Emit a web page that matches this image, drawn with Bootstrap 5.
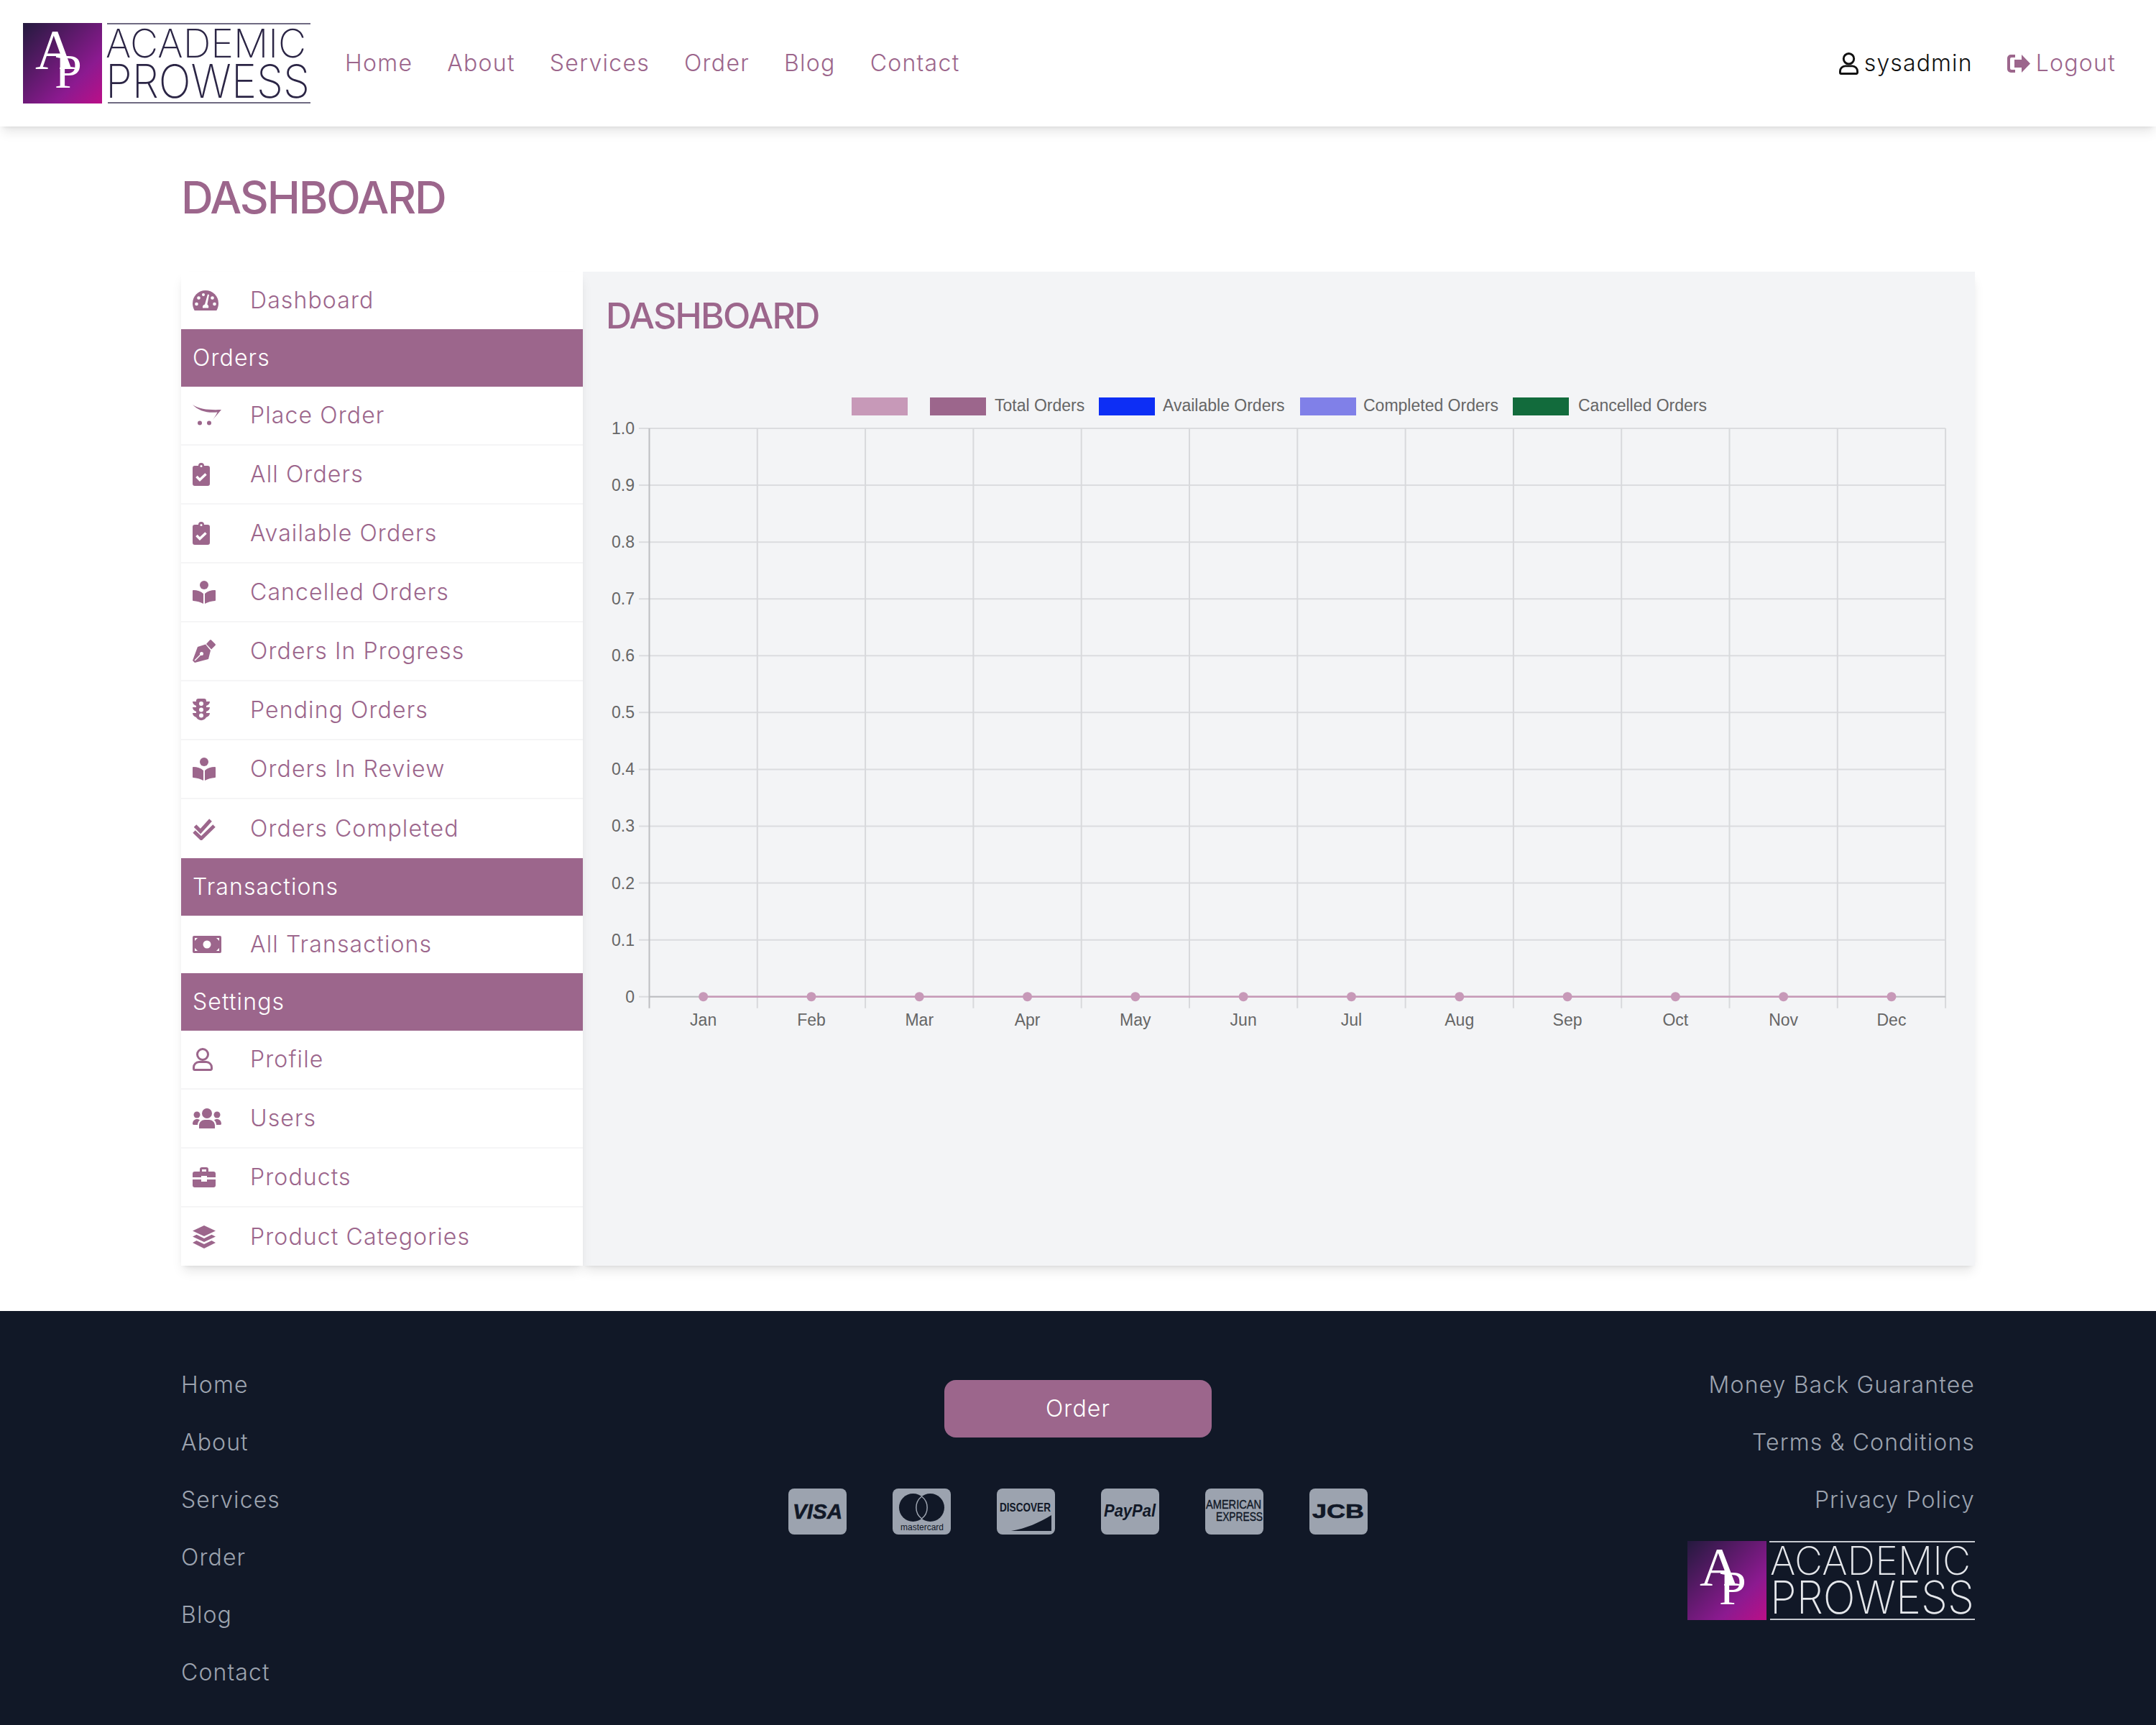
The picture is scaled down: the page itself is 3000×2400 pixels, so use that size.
<!DOCTYPE html>
<html lang="en">
<head>
    <meta charset="UTF-8">
    <meta name="viewport" content="width=device-width, initial-scale=1.0">
    <title>Academic Prowess - Dashboard</title>

    <!-- Bootstrap CSS -->
    <link href="https://cdn.jsdelivr.net/npm/bootstrap@5.3.0/dist/css/bootstrap.min.css" rel="stylesheet">
    <style>
        body {
            background-color: #fff;
            font-family: Inter, "Open Sans", sans-serif;
            font-weight: 300;
            font-size: 32px;
            color: #9c668c;
            letter-spacing: .035em;
        }
        .top-bar {
            height: 176px;
            padding: 0 32px 0 32px;
            background: #fff;
            box-shadow: 0 10px 15px -3px rgba(0, 0, 0, .1), 0 4px 6px -4px rgba(0, 0, 0, .1);
            position: relative;
        }
        .top-bar .nav-link {
            color: #9c668c;
            padding: 0 24px;
            font-size: 32px;
            letter-spacing: .04em;
        }
        .top-links { margin-left: 24px; }
        .user-name { color: #111; }
        .wrap-page { width: 2496px; margin: 0 auto; }
        .page-title {
            font-size: 62px;
            font-weight: 500;
            letter-spacing: -.035em;
            color: #9c668c;
            line-height: 76px;
            margin: 61px 0 65px;
        }
        .side-menu {
            width: 559px;
            flex: none;
            box-shadow: 0 10px 15px -3px rgba(0, 0, 0, .1), 0 4px 6px -4px rgba(0, 0, 0, .1);
            position: relative;
            --bs-list-group-border-radius: 0;
        }
        .side-menu .list-group-item {
            display: flex;
            align-items: center;
            height: 82px;
            padding: 0 0 0 16px;
            border: 0;
            border-bottom: 2px solid #f5f5f6;
            color: #9c668c;
            background: #fff;
            font-size: 32px;
        }
        .side-menu .side-first, .side-menu .side-single { height: 80px; border-bottom: 0; }
        .side-menu .side-last { height: 81px; border-bottom: 0; }
        .side-menu .side-head {
            height: 80px;
            background: #9c668c;
            color: #fff;
            border-bottom: 0;
        }
        .ico-slot { width: 80px; flex: none; display: flex; align-items: center; }
        .main-panel {
            flex: 1;
            background: #f3f4f6;
            padding: 30px 30px 0 32px;
            box-shadow: 0 10px 15px -3px rgba(0, 0, 0, .1), 0 4px 6px -4px rgba(0, 0, 0, .1);
        }
        .panel-title {
            font-size: 50px;
            font-weight: 500;
            letter-spacing: -.035em;
            color: #9c668c;
            line-height: 62px;
            margin: 0 0 60px;
        }
        .chart-box { display: block; margin-left: 2px; }
        .chart-box text { font-family: "Liberation Sans", Arial, sans-serif; font-size: 23px; fill: #666; letter-spacing: 0; }
        .site-foot {
            margin-top: 63px;
            height: 577px;
            background: #111827;
            padding-top: 63px;
        }
        .foot-grid {
            display: grid;
            grid-template-columns: 1fr auto 1fr;
        }
        .foot-link {
            display: block;
            height: 80px;
            line-height: 80px;
            color: #9ca3af;
            text-decoration: none;
        }
        .foot-mid { padding-top: 33px; }
        .order-btn {
            width: 372px;
            height: 80px;
            background: #9c668c;
            border: 0;
            border-radius: 16px;
            color: #fff;
            font-size: 32px;
            font-weight: 300;
            letter-spacing: inherit;
        }
        .pay-row { gap: 64px; margin-top: 71px; }
        .pay-ico { display: block; overflow: hidden; }
        .pay-ico text { font-family: "Liberation Sans", Arial, sans-serif; fill: #111827; letter-spacing: 0; }
        .foot-logo { margin-top: 17px; color: #e5e7eb; }
        .logo-svg { display: block; overflow: visible; }
        .logo-svg text.word { font-family: Inter, sans-serif; font-weight: 200; fill: currentColor; letter-spacing: 0; }
        .logo-svg text.mono { font-family: "Liberation Serif", serif; fill: #fff; letter-spacing: 0; }
    </style>
</head>
<body>
    <!-- icons -->
    <svg width="0" height="0" class="d-block">
        <defs>
            <linearGradient id="logoGrad" x1="0" y1="0" x2="1" y2="1">
                <stop offset="0" stop-color="#241a3e"/>
                <stop offset=".7" stop-color="#8c1a90"/>
                <stop offset="1" stop-color="#bb0f88"/>
            </linearGradient>
        </defs>
        <symbol id="i-gauge" viewBox="0 0 36 28">
            <path fill="currentColor" d="M18 0A18 18 0 0 1 36 18c0 3.600-1 7-2.700 10H2.700C1 25 0 21.600 0 18A18 18 0 0 1 18 0Z"/>
            <g fill="#fff"><circle cx="5.500" cy="19" r="2.300"/><circle cx="8.500" cy="10.500" r="2.300"/><circle cx="27.500" cy="10.500" r="2.300"/><circle cx="30.500" cy="19" r="2.300"/><circle cx="15" cy="6" r="2"/></g>
            <path fill="#fff" d="M14 24.500a4.500 4.500 0 0 1 3-5L21 5.500l2 .5-2.600 13.500a4.500 4.500 0 0 1 1.600 5Z"/>
        </symbol>
        <symbol id="i-cart" viewBox="0 0 40 30">
            <path fill="currentColor" d="M0 0C10 7 24 7.500 40 7L28 21C31 17 33 14 34.500 10.500 20 12 8 8.500 0 0Z"/>
            <circle cx="10" cy="25.500" r="3" fill="currentColor"/><circle cx="23" cy="25.500" r="3" fill="currentColor"/>
        </symbol>
        <symbol id="i-clip" viewBox="0 0 24 32">
            <path fill="currentColor" d="M3 4h5a4 4 0 0 1 8 0h5a3 3 0 0 1 3 3v22a3 3 0 0 1-3 3H3a3 3 0 0 1-3-3V7a3 3 0 0 1 3-3Z"/>
            <circle cx="12" cy="4.500" r="1.500" fill="#fff"/>
            <path fill="none" stroke="#fff" stroke-width="3.500" d="M5.500 19l4.500 4.500 8.500-8"/>
        </symbol>
        <symbol id="i-book" viewBox="0 0 32 32">
            <circle cx="16" cy="6" r="6" fill="currentColor"/>
            <path fill="currentColor" d="M1 13c5.500 0 10.500 1.500 14 5v14C11 29.500 6 28.500 1 28a1 1 0 0 1-1-1V14a1 1 0 0 1 1-1ZM31 13c-5.500 0-10.500 1.500-14 5v14c4-2.500 9-3.500 14-4a1 1 0 0 0 1-1V14a1 1 0 0 0-1-1Z"/>
        </symbol>
        <symbol id="i-pen" viewBox="0 0 32 32">
            <path fill="currentColor" d="M0 29 7 10l11-3.500L25 15l-3 12-19 5Z"/>
            <path fill="currentColor" d="M19 6 24 .5a1.500 1.500 0 0 1 2 0L31.500 6a1.500 1.500 0 0 1 0 2L26 13.500Z"/>
            <path stroke="#fff" stroke-width="1.500" d="M3 29 11 21"/>
            <circle cx="12.500" cy="19.500" r="2.500" fill="#fff"/>
        </symbol>
        <symbol id="i-light" viewBox="0 0 24 32">
            <path fill="currentColor" d="M0 4h5V3a3 3 0 0 1 3-3h8a3 3 0 0 1 3 3v1h5c0 3-2 5-5 6v2h5c0 3-2 5-5 6v2h5c0 3-2 5-5 6a8 8 0 0 1-14 0c-3-1-5-3-5-6h5v-2c-3-1-5-3-5-6h5v-2C2 9 0 7 0 4Z"/>
            <g fill="#fff"><circle cx="12" cy="7" r="3"/><circle cx="12" cy="15.500" r="3"/><circle cx="12" cy="23.500" r="3"/></g>
        </symbol>
        <symbol id="i-check" viewBox="0 0 32 32">
            <g fill="none" stroke="currentColor" stroke-width="5"><path d="M3.500 12 11 19.500 25 4"/><path d="M2 20 12 29.500 30 12"/></g>
        </symbol>
        <symbol id="i-money" viewBox="0 0 40 24">
            <rect width="40" height="24" rx="2" fill="currentColor"/>
            <circle cx="20" cy="12" r="5.500" fill="#fff"/>
            <g fill="#fff"><path d="M3 3h4l-4 4ZM37 3h-4l4 4ZM3 21h4l-4-4ZM37 21h-4l4-4Z"/></g>
        </symbol>
        <symbol id="i-user" viewBox="0 0 28 32">
            <g fill="none" stroke="currentColor" stroke-width="3"><circle cx="14" cy="9" r="7.500"/><path d="M9 19.500h10a7.500 7.500 0 0 1 7.500 7.500v2a1.500 1.500 0 0 1-1.500 1.500H3A1.500 1.500 0 0 1 1.500 29v-2A7.500 7.500 0 0 1 9 19.500Z"/></g>
        </symbol>
        <symbol id="i-users" viewBox="0 0 40 28">
            <g fill="currentColor"><circle cx="20" cy="7" r="7"/><circle cx="6" cy="9" r="4.500"/><circle cx="34" cy="9" r="4.500"/>
            <path d="M9 28v-4c0-5 4-8 8-8h6c4 0 8 3 8 8v4a1 1 0 0 1-1 1H10a1 1 0 0 1-1-1ZM0 22c0-5 3-7 6-7 2 0 3 .5 4 1.500-2 1.500-3 4-3 6.500H2a2 2 0 0 1-2-1ZM40 22c0-5-3-7-6-7-2 0-3 .5-4 1.500 2 1.500 3 4 3 6.500h5a2 2 0 0 0 2-1Z"/></g>
        </symbol>
        <symbol id="i-case" viewBox="0 0 32 28">
            <path fill="currentColor" d="M10 6V3a3 3 0 0 1 3-3h6a3 3 0 0 1 3 3v3h7a3 3 0 0 1 3 3v5H20v-2h-8v2H0V9a3 3 0 0 1 3-3ZM13 3v3h6V3ZM0 17h12v3h8v-3h12v8a3 3 0 0 1-3 3H3a3 3 0 0 1-3-3Z"/>
        </symbol>
        <symbol id="i-stack" viewBox="0 0 32 32">
            <g fill="currentColor"><path d="M16 0 32 7.500 16 15 0 7.500Z"/><path d="M5.500 12.800 16 18l10.500-5.200L32 15.500 16 23 0 15.500Z"/><path d="M5.500 21 16 26l10.500-5L32 24 16 32 0 24Z"/></g>
        </symbol>
        <symbol id="i-logout" viewBox="0 0 32 25">
            <path fill="currentColor" d="M32 12.500 20 25v-7H10V7h10V0ZM11 0v4H6a2 2 0 0 0-2 2v13a2 2 0 0 0 2 2h5v4H5a5 5 0 0 1-5-5V5a5 5 0 0 1 5-5Z"/>
        </symbol>
    </svg>

    <nav class="navbar top-bar d-flex flex-nowrap justify-content-between">
        <div class="d-flex align-items-center">
            <a href="#" class="d-block">
                <svg class="logo-svg" width="400" height="112" viewBox="0 0 400 112" style="color:#2b2545">
                    <rect width="110" height="112" fill="url(#logoGrad)"/>
                    <rect x="117" width="283" height="2" fill="#6f6a82"/>
                    <rect x="118" y="110" width="282" height="2" fill="#6f6a82"/>
                    <text class="mono" x="17" y="63" font-size="78">A</text>
                    <text class="mono" x="44" y="90" font-size="68">P</text>
                    <text class="word" x="115" y="48" font-size="55" textLength="279" lengthAdjust="spacingAndGlyphs">ACADEMIC</text>
                    <text class="word" x="115" y="104" font-size="64" textLength="284" lengthAdjust="spacingAndGlyphs">PROWESS</text>
                </svg>
            </a>
            <ul class="nav top-links flex-nowrap">
                <li class="nav-item"><a class="nav-link" href="#">Home</a></li>
                <li class="nav-item"><a class="nav-link" href="#">About</a></li>
                <li class="nav-item"><a class="nav-link" href="#">Services</a></li>
                <li class="nav-item"><a class="nav-link" href="#">Order</a></li>
                <li class="nav-item"><a class="nav-link" href="#">Blog</a></li>
                <li class="nav-item"><a class="nav-link" href="#">Contact</a></li>
            </ul>
        </div>
        <div class="d-flex align-items-center">
            <span class="user-name d-flex align-items-center gap-2"><svg width="27" height="31"><use href="#i-user"/></svg>sysadmin</span>
            <a href="#" class="nav-link d-flex align-items-center gap-2 ms-4"><svg width="32" height="25"><use href="#i-logout"/></svg>Logout</a>
        </div>
    </nav>

    <main class="wrap-page">
        <h1 class="page-title">DASHBOARD</h1>
        <div class="d-flex">
            <div class="list-group side-menu">
                <a href="#" class="list-group-item side-first"><span class="ico-slot"><svg width="36" height="28"><use href="#i-gauge"/></svg></span>Dashboard</a>
                <div class="list-group-item side-head">Orders</div>
                <a href="#" class="list-group-item"><span class="ico-slot"><svg width="40" height="30"><use href="#i-cart"/></svg></span>Place Order</a>
                <a href="#" class="list-group-item"><span class="ico-slot"><svg width="24" height="32"><use href="#i-clip"/></svg></span>All Orders</a>
                <a href="#" class="list-group-item"><span class="ico-slot"><svg width="24" height="32"><use href="#i-clip"/></svg></span>Available Orders</a>
                <a href="#" class="list-group-item"><span class="ico-slot"><svg width="32" height="32"><use href="#i-book"/></svg></span>Cancelled Orders</a>
                <a href="#" class="list-group-item"><span class="ico-slot"><svg width="32" height="32"><use href="#i-pen"/></svg></span>Orders In Progress</a>
                <a href="#" class="list-group-item"><span class="ico-slot"><svg width="24" height="32"><use href="#i-light"/></svg></span>Pending Orders</a>
                <a href="#" class="list-group-item"><span class="ico-slot"><svg width="32" height="32"><use href="#i-book"/></svg></span>Orders In Review</a>
                <a href="#" class="list-group-item border-0"><span class="ico-slot"><svg width="32" height="32"><use href="#i-check"/></svg></span>Orders Completed</a>
                <div class="list-group-item side-head">Transactions</div>
                <a href="#" class="list-group-item side-single"><span class="ico-slot"><svg width="40" height="24"><use href="#i-money"/></svg></span>All Transactions</a>
                <div class="list-group-item side-head">Settings</div>
                <a href="#" class="list-group-item"><span class="ico-slot"><svg width="28" height="32"><use href="#i-user"/></svg></span>Profile</a>
                <a href="#" class="list-group-item"><span class="ico-slot"><svg width="40" height="28"><use href="#i-users"/></svg></span>Users</a>
                <a href="#" class="list-group-item"><span class="ico-slot"><svg width="32" height="28"><use href="#i-case"/></svg></span>Products</a>
                <a href="#" class="list-group-item side-last"><span class="ico-slot"><svg width="32" height="32"><use href="#i-stack"/></svg></span>Product Categories</a>
            </div>
            <section class="main-panel">
                <h2 class="panel-title">DASHBOARD</h2>
                <svg id="ordersChart" class="chart-box" width="1872" height="920" viewBox="844 530 1872 920"></svg>
            </section>
        </div>
    </main>

    <footer class="site-foot">
        <div class="wrap-page foot-grid">
            <div>
                <a class="foot-link" href="#">Home</a>
                <a class="foot-link" href="#">About</a>
                <a class="foot-link" href="#">Services</a>
                <a class="foot-link" href="#">Order</a>
                <a class="foot-link" href="#">Blog</a>
                <a class="foot-link" href="#">Contact</a>
            </div>
            <div class="foot-mid d-flex flex-column align-items-center">
                <button type="button" class="btn order-btn">Order</button>
                <div class="d-flex pay-row">
                    <svg class="pay-ico" width="81" height="64" viewBox="0 0 81 64"><rect width="81" height="64" rx="8" fill="#9ca3af"/><text x="6" y="42" font-size="29" font-weight="700" font-style="italic" textLength="69" lengthAdjust="spacingAndGlyphs" stroke="#111827" stroke-width=".6">VISA</text></svg>
                    <svg class="pay-ico" width="81" height="64" viewBox="0 0 81 64"><rect width="81" height="64" rx="8" fill="#9ca3af"/><circle cx="28.500" cy="26.500" r="19.500" fill="#111827"/><circle cx="52.500" cy="26.500" r="19.500" fill="#111827"/><path d="M40.500 11a19.500 19.500 0 0 1 0 31 19.500 19.500 0 0 1 0-31Z" fill="#111827" stroke="#9ca3af" stroke-width="1.500"/><text x="11" y="58" font-size="12" textLength="60">mastercard</text></svg>
                    <svg class="pay-ico" width="81" height="64" viewBox="0 0 81 64"><rect width="81" height="64" rx="8" fill="#9ca3af"/><text x="4" y="32" font-size="17" font-weight="700" textLength="71" lengthAdjust="spacingAndGlyphs">DISCOVER</text><path d="M20 59C40 56 60 47 76 37V59Z" fill="#111827"/></svg>
                    <svg class="pay-ico" width="81" height="64" viewBox="0 0 81 64"><rect width="81" height="64" rx="8" fill="#9ca3af"/><text x="4" y="39" font-size="24" font-weight="700" font-style="italic" textLength="72" lengthAdjust="spacingAndGlyphs">PayPal</text></svg>
                    <svg class="pay-ico" width="81" height="64" viewBox="0 0 81 64"><rect width="81" height="64" rx="8" fill="#9ca3af"/><text x="1" y="28" font-size="17" textLength="77" lengthAdjust="spacingAndGlyphs" stroke="#111827" stroke-width=".4">AMERICAN</text><text x="15" y="45" font-size="17" textLength="65" lengthAdjust="spacingAndGlyphs" stroke="#111827" stroke-width=".4">EXPRESS</text></svg>
                    <svg class="pay-ico" width="81" height="64" viewBox="0 0 81 64"><rect width="81" height="64" rx="8" fill="#9ca3af"/><text x="4" y="41" font-size="27" font-weight="700" textLength="72" lengthAdjust="spacingAndGlyphs" stroke="#111827" stroke-width=".6">JCB</text></svg>
                </div>
            </div>
            <div class="text-end">
                <a class="foot-link" href="#">Money Back Guarantee</a>
                <a class="foot-link" href="#">Terms &amp; Conditions</a>
                <a class="foot-link" href="#">Privacy Policy</a>
                <div class="foot-logo d-flex justify-content-end">
                    <svg class="logo-svg" width="400" height="110" viewBox="0 0 400 112" preserveAspectRatio="none">
                        <rect width="110" height="112" fill="url(#logoGrad)"/>
                        <rect x="114" width="286" height="2" fill="#c9ccd2"/>
                        <rect x="115" y="110" width="285" height="2" fill="#c9ccd2"/>
                        <text class="mono" x="17" y="63" font-size="78">A</text>
                        <text class="mono" x="44" y="90" font-size="68">P</text>
                        <text class="word" x="115" y="48" font-size="55" textLength="279" lengthAdjust="spacingAndGlyphs">ACADEMIC</text>
                        <text class="word" x="115" y="103" font-size="64" textLength="284" lengthAdjust="spacingAndGlyphs">PROWESS</text>
                    </svg>
                </div>
            </div>
        </div>
    </footer>

    <!-- Bootstrap JS -->
    <script src="https://cdn.jsdelivr.net/npm/bootstrap@5.3.0/dist/js/bootstrap.bundle.min.js"></script>

    <script>
        // draws the same thing chart.js drew: all twelve months at zero
        const months = ["Jan", "Feb", "Mar", "Apr", "May", "Jun", "Jul", "Aug", "Sep", "Oct", "Nov", "Dec"];
        const left = 902.5, stepX = 150.3, top0 = 596, stepY = 79.07;
        const bottom = top0 + stepY * 10;
        const right = left + stepX * 12;
        let out = "";

        const legend = [
            { x: 1184, textX: 0, color: "#c799b8", label: "" },
            { x: 1293, textX: 1383, color: "#9c668c", label: "Total Orders" },
            { x: 1528, textX: 1617, color: "#0d2ef5", label: "Available Orders" },
            { x: 1808, textX: 1896, color: "#8080e8", label: "Completed Orders" },
            { x: 2104, textX: 2195, color: "#126b3c", label: "Cancelled Orders" }
        ];
        legend.forEach(function (item) {
            out += `<rect x="${item.x}" y="553" width="78" height="25" fill="${item.color}"/>`;
            if (item.label) out += `<text x="${item.textX}" y="572">${item.label}</text>`;
        });

        for (let i = 0; i <= 10; i++) {
            const y = top0 + stepY * i;
            out += `<line x1="888" x2="${right}" y1="${y}" y2="${y}" stroke="#dbdcdf" stroke-width="2"/>`;
            const label = i === 10 ? "0" : (1 - i / 10).toFixed(1);
            out += `<text x="882" y="${y + 8}" text-anchor="end">${label}</text>`;
        }
        for (let i = 0; i <= 12; i++) {
            const x = left + stepX * i;
            out += `<line x1="${x}" x2="${x}" y1="${top0}" y2="${bottom + 16}" stroke="${i === 0 ? "#bdbec1" : "#d8d9dc"}" stroke-width="2"/>`;
        }
        out += `<line x1="${left}" x2="${right}" y1="${bottom}" y2="${bottom}" stroke="#bdbec1" stroke-width="2"/>`;
        out += `<line x1="${left + stepX / 2}" x2="${right - stepX / 2}" y1="${bottom}" y2="${bottom}" stroke="#c799b8" stroke-width="2.500"/>`;
        months.forEach(function (month, i) {
            const x = left + stepX * (i + 0.5);
            out += `<circle cx="${x}" cy="${bottom}" r="6.500" fill="#c799b8"/>`;
            out += `<text x="${x}" y="1427" text-anchor="middle">${month}</text>`;
        });
        document.getElementById("ordersChart").innerHTML = out;
    </script>
</body>
</html>
